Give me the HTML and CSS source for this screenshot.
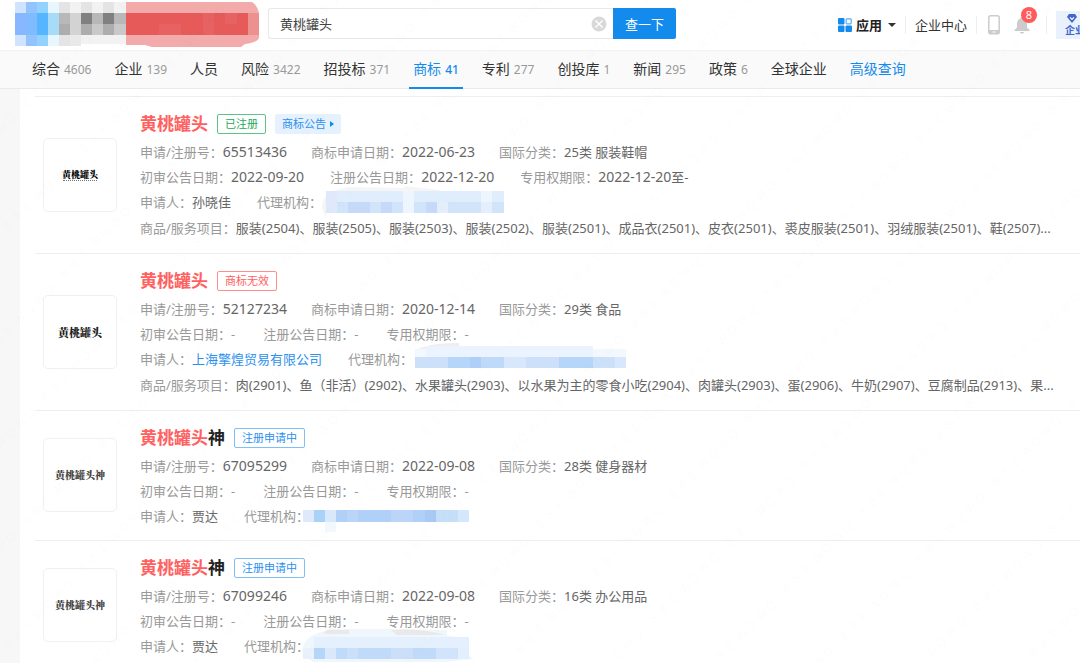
FILE: index.html
```html
<!DOCTYPE html>
<html lang="zh-CN">
<head>
<meta charset="utf-8">
<title>商标查询</title>
<link rel="stylesheet" href="styles.css">
</head>
<body>
<header class="top">
  <svg class="logo" width="244" height="45" viewBox="0 0 244 45" shape-rendering="crispEdges" aria-hidden="true">
    <path fill="#d0e3ff" d="M0 0h11v11H0zM0 33h11v11H0z"/><path fill="#92c3ff" d="M11 0h11v11H11zM11 33h11v11H11z"/><path fill="#92d2ff" d="M22 0h11v11H22zM22 33h11v11H22z"/>
    <path fill="#88b6ff" d="M0 11h11v22H0z"/><path fill="#80baff" d="M11 11h11v22H11z"/><path fill="#55b5ff" d="M22 11h11v22H22z"/>
    <path fill="#e8f6fd" d="M33 0h11v11H33zM33 33h11v11H33z"/><path fill="#a7dbf8" d="M33 11h11v22H33z"/>
    <path fill="#e4e4e4" d="M44 0h11v11H44zM44 33h11v11H44zM66 0h11v11H66zM88 0h11v11H88z"/><path fill="#f2f2f2" d="M55 0h11v11H55zM77 0h11v11H77zM99 0h12v11H99zM66 33h45v9H66z"/><path fill="#e9e9e9" d="M55 33h11v11H55z"/>
    <path fill="#b8b8b8" d="M44 11h11v11H44zM77 11h11v11H77zM99 11h12v11H99z"/><path fill="#d3d3d3" d="M55 11h11v22H55z"/><path fill="#808080" d="M66 11h11v11H66zM88 11h11v11H88z"/>
    <path fill="#adadad" d="M44 22h11v11H44zM66 22h11v11H66zM88 22h11v11H88z"/><path fill="#c9c9c9" d="M77 22h11v11H77zM99 22h12v11H99z"/>
    <path fill="#f2aaaa" shape-rendering="auto" d="M111 0h126q5 3 7 11v24q0 5-14 7l-4 3h-89l-7-2h-19z"/>
    <path fill="#ec9090" d="M233 11h11v22h-11z"/><path fill="#e65a5a" d="M111 11h122v22H111z"/><path fill="#e76262" d="M144 22h22v11h-22zM188 11h11v22h-11zM210 11h12v11h-12z"/>
  </svg>
  <form class="search">
    <input class="search-input" type="text" value="黄桃罐头" aria-label="搜索">
    <button class="clear" type="button" aria-label="清除"><svg width="16" height="16" viewBox="0 0 16 16"><circle cx="8" cy="8" r="7.5" fill="#d9d9d9"/><path d="M4.500 4.500l7 7M11.500 4.500l-7 7" stroke="#fff" stroke-width="1.300"/></svg></button>
    <button class="submit" type="button">查一下</button>
  </form>
  <div class="tools">
    <button class="apps" type="button">
      <svg width="14" height="14" viewBox="0 0 14 14"><g fill="#128bed"><rect width="6.500" height="6.500" rx="1"/><rect y="7.500" width="6.500" height="6.500" rx="1"/><rect x="7.500" y="7.500" width="6.500" height="6.500" rx="1"/></g><rect x="8.200" y=".8" width="5" height="5" rx=".8" fill="none" stroke="#5aaef3" stroke-width="1.200"/></svg>
      <span>应用</span><i class="caret"></i>
    </button>
    <a class="center" href="#">企业中心</a>
    <div class="icons">
      <svg width="12" height="20" viewBox="0 0 12 20"><rect x=".8" y=".8" width="10.400" height="18" rx="1.800" fill="none" stroke="#ccc" stroke-width="1.500"/><path d="M1 15h10v4H1z" fill="#ccc"/><path d="M4.500 17h3" stroke="#fff"/></svg>
      <div class="bell">
        <svg width="16" height="18" viewBox="0 0 16 18"><path d="M8 1c.8 0 1.200.5 1.200 1.200C12 3 13 5.300 13 8v3.500l2.500 2.500v1H.5v-1L3 11.500V8c0-2.700 1-5 3.800-5.800C6.800 1.500 7.200 1 8 1zM6 16h4c0 2-4 2-4 0z" fill="#ccc"/></svg>
        <span class="badge">8</span>
      </div>
    </div>
    <a class="vip" href="#"><svg width="10" height="9" viewBox="0 0 10 9"><path d="M2 0h6l2 3-5 6-5-6z" fill="#3f66cc"/><path d="M3 3.300l2 2 2-2" fill="none" stroke="#fff" stroke-width="1.200"/></svg><span>企业</span></a>
  </div>
</header>
<nav class="tabs">
  <a href="#">综合<small>4606</small></a><a href="#">企业<small>139</small></a><a href="#">人员</a><a href="#">风险<small>3422</small></a><a href="#">招投标<small>371</small></a><a class="active" href="#">商标<small>41</small></a><a href="#">专利<small>277</small></a><a href="#">创投库<small>1</small></a><a href="#">新闻<small>295</small></a><a href="#">政策<small>6</small></a><a href="#">全球企业</a><a class="advanced" href="#">高级查询</a>
</nav>
<main class="results">
  <article class="card">
    <div class="thumb thumb-seal"><b>黄桃罐头</b><i></i></div>
    <div class="info">
      <div class="head"><h2><em>黄桃罐头</em></h2><span class="tag green">已注册</span><a class="notice" href="#">商标公告<i></i></a></div>
      <div class="row numbers"><span>申请/注册号：<b class="num">65513436</b></span><span>商标申请日期：<b class="num">2022-06-23</b></span><span>国际分类：<b>25类 服装鞋帽</b></span></div>
      <div class="row"><span>初审公告日期：<b class="num">2022-09-20</b></span><span>注册公告日期：<b class="num">2022-12-20</b></span><span>专用权期限：<b class="num">2022-12-20</b><b>至-</b></span></div>
      <div class="row"><span>申请人：<b>孙晓佳</b></span><span class="agent">代理机构：<svg class="mask gap-m" width="178" height="32" viewBox="0 0 178 32"><path d="M-4 22Q-4 4 24 1l54 1V0l36 4v6H0v22z" fill="#f5f5f5"/><g shape-rendering="crispEdges"><path fill="#e0edfc" d="M0 5h178v11H0z"/><path fill="#d2e4fa" d="M0 16h178v11H0z"/><path fill="#dfe9fb" d="M0 5h11v22H0z"/><path fill="#c5daf8" d="M22 16h22v11H22zM55 16h11v11H55zM100 16h11v11h-11z"/><path fill="#edf5fe" d="M77 5h11v22H77zM155 5h11v11h-11z"/><path fill="#e4eefc" d="M111 16h11v11h-11zM155 16h11v11h-11z"/></g></svg></span></div>
      <p class="goods">商品/服务项目：<b>服装(2504)、服装(2505)、服装(2503)、服装(2502)、服装(2501)、成品衣(2501)、皮衣(2501)、裘皮服装(2501)、羽绒服装(2501)、鞋(2507)...</b></p>
    </div>
  </article>
  <article class="card">
    <div class="thumb"><b class="strong">黄桃罐头</b></div>
    <div class="info">
      <div class="head"><h2><em>黄桃罐头</em></h2><span class="tag red">商标无效</span></div>
      <div class="row numbers"><span>申请/注册号：<b class="num">52127234</b></span><span>商标申请日期：<b class="num">2020-12-14</b></span><span>国际分类：<b>29类 食品</b></span></div>
      <div class="row dates"><span>初审公告日期：-</span><span>注册公告日期：-</span><span>专用权期限：-</span></div>
      <div class="row"><span>申请人：<a href="#">上海擎煌贸易有限公司</a></span><span class="agent">代理机构：<svg class="mask" width="211" height="34" viewBox="0 0 211 34"><path d="M0 8Q18 0 44 1v7z" fill="#eee"/><g shape-rendering="crispEdges"><path fill="#f2f8fe" d="M0 7h211v8H0z"/><path fill="#eaf3fe" d="M11 4h167v11H11z"/><path fill="#cce0f9" d="M0 15h211v11H0z"/><path fill="#b5d5f9" d="M33 15h22v11H33zM144 15h34v11h-34z"/><path fill="#aecff7" d="M55 15h11v11H55z"/><path fill="#bfd9f9" d="M66 15h23v11H66z"/><path fill="#d8e7fb" d="M89 15h22v11H89zM200 15h11v11h-11z"/></g></svg></span></div>
      <p class="goods">商品/服务项目：<b>肉(2901)、鱼（非活）(2902)、水果罐头(2903)、以水果为主的零食小吃(2904)、肉罐头(2903)、蛋(2906)、牛奶(2907)、豆腐制品(2913)、果...</b></p>
    </div>
  </article>
  <article class="card">
    <div class="thumb"><b>黄桃罐头神</b></div>
    <div class="info">
      <div class="head"><h2><em>黄桃罐头</em>神</h2><span class="tag blue">注册申请中</span></div>
      <div class="row numbers"><span>申请/注册号：<b class="num">67095299</b></span><span>商标申请日期：<b class="num">2022-09-08</b></span><span>国际分类：<b>28类 健身器材</b></span></div>
      <div class="row dates"><span>初审公告日期：-</span><span>注册公告日期：-</span><span>专用权期限：-</span></div>
      <div class="row"><span>申请人：<b>贾达</b></span><span class="agent">代理机构：<svg class="mask tight" width="166" height="36" viewBox="0 0 166 36"><g shape-rendering="crispEdges"><path fill="#dfe9fb" d="M0 12h11v12H0z"/><path fill="#a8d2f8" d="M11 12h11v12H11z"/><path fill="#dae8fc" d="M22 12h11v12H22z"/><path fill="#b0d0f8" d="M33 12h100v12H33z"/><path fill="#bbd5f8" d="M44 12h11v12H44zM88 12h22v12H88z"/><path fill="#a9c9f5" d="M122 12h11v12h-11z"/><path fill="#c5dff9" d="M133 12h22v12h-22z"/><path fill="#d5e7fc" d="M155 12h11v12h-11z"/><path fill="#f3f8fe" d="M22 24h11v10H22z"/></g></svg></span></div>
    </div>
  </article>
  <article class="card">
    <div class="thumb"><b>黄桃罐头神</b></div>
    <div class="info">
      <div class="head"><h2><em>黄桃罐头</em>神</h2><span class="tag blue">注册申请中</span></div>
      <div class="row numbers"><span>申请/注册号：<b class="num">67099246</b></span><span>商标申请日期：<b class="num">2022-09-08</b></span><span>国际分类：<b>16类 办公用品</b></span></div>
      <div class="row dates"><span>初审公告日期：-</span><span>注册公告日期：-</span><span>专用权期限：-</span></div>
      <div class="row"><span>申请人：<b>贾达</b></span><span class="agent">代理机构：<svg class="mask tight" width="172" height="40" viewBox="0 0 172 40"><path d="M0 28Q-4 10 28 3h52l64 1v6l22 2v18l5 3-30 3H10z" fill="#eff6fc"/><path d="M24 4h22v4H20zM88 4q30-2 54 5H94z" fill="#e9e9e9"/><g shape-rendering="crispEdges"><path fill="#e4f0fd" d="M11 11h155v11H11z"/><path fill="#eaf1fc" d="M0 22h11v11H0z"/><path fill="#b4d6f8" d="M11 22h11v11H11z"/><path fill="#dae8fc" d="M22 22h11v11H22z"/><path fill="#c0daf9" d="M33 22h100v11H33z"/><path fill="#cbdff9" d="M44 22h11v11H44zM88 22h22v11H88z"/><path fill="#d2e4fb" d="M133 22h22v11h-22z"/><path fill="#e2effd" d="M155 22h11v11h-11z"/></g></svg></span></div>
    </div>
  </article>
</main>
<canvas class="watermark" aria-hidden="true"></canvas>
<script src="watermark.js"></script>
</body>
</html>
```

FILE: styles.css
```css
* { box-sizing: border-box; }
body {
  margin: 0;
  min-height: 100vh;
  overflow: hidden;
  background: #f7f7f7;
  color: #333;
  font: 13px/20px "Noto Sans", "Noto Sans CJK SC", sans-serif;
}
a { color: inherit; text-decoration: none; }
button { padding: 0; border: 0; background: none; font: inherit; color: inherit; }
svg { display: block; flex: none; }

.top { display: flex; align-items: center; height: 50px; padding-left: 15px; background: #fff; }
.logo { margin-bottom: 2px; }
.search { display: flex; position: relative; flex: 0 1 408px; height: 31px; margin: 0 0 3px 9px; }
.search-input { flex: 1; min-width: 0; padding: 0 40px 0 11px; border: 1px solid #e8e8e8; border-right: 0; border-radius: 3px 0 0 3px; font: inherit; color: #444; outline: 0; }
.clear { position: absolute; right: 69px; top: 8px; }
.submit { width: 63px; border-radius: 0 2px 2px 0; background: #128bed; color: #fff; }

.tools { display: flex; align-items: center; margin-left: auto; white-space: nowrap; }
.apps { display: flex; align-items: center; gap: 4px; padding-right: 9px; border-right: 1px solid #eee; font-weight: 700; line-height: 18px; color: #222; }
.caret { margin-left: 2px; border: 4px solid transparent; border-top-color: #333; border-bottom: 0; }
.center { padding: 0 9px; border-right: 1px solid #eee; line-height: 18px; }
.icons { display: flex; align-items: center; gap: 14px; padding: 0 16px 0 11px; border-right: 1px solid #eee; height: 18px; }
.bell { position: relative; }
.badge { position: absolute; left: 7px; top: -9px; width: 16px; height: 16px; border-radius: 8px; background: #ff5b5b; color: #fff; font-size: 11px; line-height: 16px; text-align: center; }
.vip { width: 24px; height: 28px; margin: 0 0 0 9px; padding: 3px 0 0 9px; overflow: hidden; background: #e9f1fd; color: #3f66cc; font-size: 10px; font-weight: 700; line-height: 14px; }
.vip svg { margin-left: 2px; }

.tabs { display: flex; gap: 15px; height: 39px; padding-left: 28px; border-top: 1px solid #f2f2f2; border-bottom: 1px solid #eaeaea; background: #fafafa; font-size: 14px; line-height: 36px; white-space: nowrap; }
.tabs a { height: 38px; padding: 0 4px; }
.tabs small { margin-left: 4px; font-size: 12px; color: #999; }
.tabs .active { border-bottom: 2px solid #128bed; color: #128bed; }
.tabs .active small { color: inherit; font-weight: 500; }
.tabs .advanced { color: #128bed; }

.results { margin-left: 20px; padding: 7px 0 20px 15px; background: #fff; }
.card { display: flex; align-items: center; padding: 17px 0 12px 8px; border-top: 1px solid #eee; }
.thumb { display: flex; flex: none; flex-direction: column; align-items: center; justify-content: center; width: 74px; height: 74px; margin-bottom: 6px; border: 1px solid #f0f0f0; border-radius: 5px; color: #444; font: 600 10px/14px "Noto Serif CJK SC", "Noto Sans CJK SC", serif; }
.thumb .strong { font-size: 11px; font-weight: 900; color: #222; }
.thumb-seal b { font-size: 9px; font-weight: 900; line-height: 11px; color: #000; }
.thumb-seal i { width: 34px; border-top: 1px dotted #777; }
.info { flex: 1; min-width: 0; padding-left: 23px; }
.head { display: flex; align-items: center; height: 20px; margin-bottom: 5px; }
h2 { margin: 0 9px 0 0; font-size: 17px; line-height: 20px; color: #222; }
em { font-style: normal; color: #ff6060; }
.tag { padding: 0 7px; border: 1px solid; border-radius: 2px; font-size: 11px; line-height: 18px; }
.green { border-color: #5cc389; color: #22a85c; }
.red { border-color: #ff8f8f; color: #ff6060; }
.blue { border-color: #80bff5; color: #2b90ee; }
.notice { display: flex; align-items: center; gap: 4px; margin-left: 9px; padding: 0 7px; border-radius: 2px; background: #e5f1fd; color: #2b90ee; font-size: 11px; }
.notice i { border: 3px solid transparent; border-left: 4px solid #128bed; border-right: 0; }
.row { display: flex; align-items: center; gap: 26px; height: 25px; color: #999; white-space: nowrap; }
.numbers { gap: 24px; }
.dates { gap: 28px; }
.info b { font-weight: 400; color: #666; }
.info .num { font-size: 14px; }
.row a { color: #2b90ee; }
.agent { display: flex; align-items: center; }
.mask { margin: 0 0 0 2px; overflow: visible; }
.gap-m { margin-left: 4px; }
.tight { margin-left: -6px; }
.goods { margin: 2px 18px 0 0; overflow: hidden; color: #999; line-height: 25px; white-space: nowrap; text-overflow: ellipsis; }
.watermark { position: fixed; left: 0; top: 0; pointer-events: none; }
```

FILE: watermark.js
```js
// Faint diagonal user mark repeated over the whole page
const canvas = document.querySelector('.watermark');
canvas.width = window.innerWidth;
canvas.height = window.innerHeight;
const ctx = canvas.getContext('2d');
ctx.font = '12px "Open Sans", sans-serif';
ctx.fillStyle = 'rgba(0, 0, 0, 0.016)';
for (let i = -12; i < 16; i++) {
  for (let j = -16; j < 20; j++) {
    ctx.save();
    ctx.translate(787 + 133 * i + 57 * j, 175 - 30 * i + 47 * j);
    ctx.rotate(-Math.PI / 4);
    [...'88EWQWQ'].forEach((c, k) => ctx.fillText(c, k * 14, 0));
    ctx.restore();
  }
}
```
